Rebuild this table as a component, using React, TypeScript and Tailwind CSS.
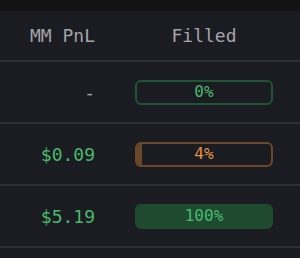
const rows = [
    { pnl: '-', filled: 0 },
    { pnl: '$0.09', filled: 4 },
    { pnl: '$5.19', filled: 100 },
];

const FillBar = ({ pct }: { pct: number }) => {
    const done = pct >= 100;
    const partial = pct > 0 && !done;
    const border = partial ? 'border-[#6a4829]' : done ? 'border-[#1f4a30]' : 'border-[#1f5535]';
    const text = partial ? 'text-[#e0913f]' : 'text-[#47b96c]';
    return (
        <div className={`relative h-[25px] w-[138px] overflow-hidden rounded-[6px] border-2 ${border} ${done ? 'bg-[#1e4a30]' : ''}`}>
            {partial && <div className="absolute inset-y-0 left-0 bg-[#6a4829]" style={{ width: `${pct}%` }} />}
            <div className={`relative flex h-full items-center justify-center text-[16px] font-light ${text}`}>{pct}%</div>
        </div>
    );
};

const App = () => {
    return (
        <div className="h-[258px] w-[300px] overflow-hidden bg-[#1b1c21] font-['DejaVu_Sans_Mono',monospace]">
            <div className="h-[11px] bg-[#131316]" />
            <div className="flex h-[51px] items-center border-b-2 border-[#2d2f35] text-[18px] font-light text-[#a3a4a9]">
                <div className="w-[111px] pr-4 text-right">MM PnL</div>
                <div className="ml-6 w-[138px] text-center">Filled</div>
            </div>
            {rows.map((r, i) => (
                <div key={i} className="flex h-[62px] items-center border-b-2 border-[#2d2f35]">
                    <div className={`w-[111px] pr-4 text-right text-[18px] font-light ${r.pnl === '-' ? 'text-[#a3a4a9]' : 'text-[#47b96c]'}`}>{r.pnl}</div>
                    <div className="ml-6">
                        <FillBar pct={r.filled} />
                    </div>
                </div>
            ))}
        </div>
    );
};

export default App;
